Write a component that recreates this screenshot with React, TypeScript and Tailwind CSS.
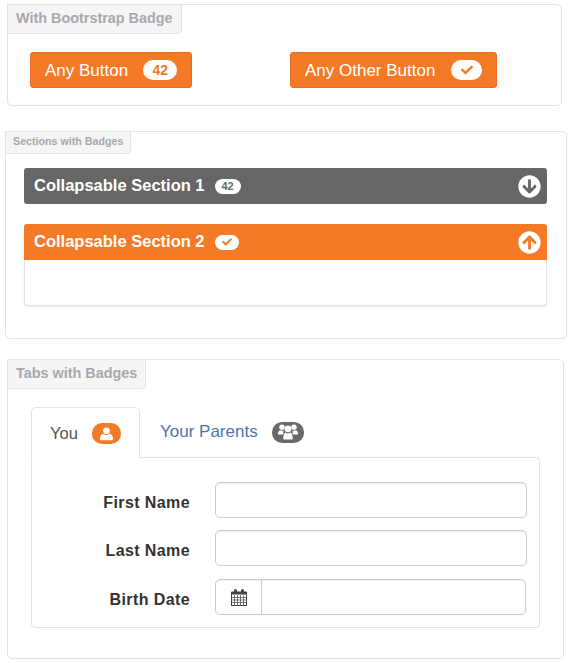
import React from 'react';
import { FaArrowCircleDown, FaArrowCircleUp, FaCheck } from 'react-icons/fa';

const orange = 'bg-[#f57a27]';

// Small grid calendar, the icon packages only have the newer shapes
const CalendarIcon = () => (
  <svg width="16" height="17" viewBox="0 0 16 17" className="text-[#444]">
    <rect x="0.5" y="3.5" width="15" height="13" fill="none" stroke="currentColor" />
    <rect x="0.5" y="2.5" width="15" height="3" fill="currentColor" />
    <rect x="3" y="0" width="3" height="4.5" rx="1.5" fill="currentColor" />
    <rect x="10" y="0" width="3" height="4.5" rx="1.5" fill="currentColor" />
    <path d="M3.5 6v10M6.5 6v10M9.5 6v10M12.5 6v10M1 8.5h14M1 11h14M1 13.5h14" stroke="currentColor" strokeWidth="0.7" fill="none" />
  </svg>
);

const UserIcon = () => (
  <svg width="13" height="14" viewBox="0 0 14 15" fill="currentColor">
    <circle cx="7" cy="4" r="3.6" />
    <path d="M1 14.2c-.6 0-1-.4-1-1 0-3.4 1.2-5.6 3.4-5.9C4.4 8.1 5.6 8.6 7 8.6s2.6-.5 3.6-1.3c2.2.3 3.4 2.5 3.4 5.9 0 .6-.4 1-1 1z" />
  </svg>
);

const UsersIcon = () => (
  <svg width="20" height="16" viewBox="0 0 20 16" fill="currentColor">
    <circle cx="4" cy="3.2" r="2.7" />
    <circle cx="16" cy="3.2" r="2.7" />
    <path d="M0 10.5C0 8 .8 6.5 2.2 6.3c.8.6 2.6.8 3.4.2-.3 1-.4 2.600-.4 4z" />
    <path d="M20 10.500C20 8 19.200 6.500 17.800 6.300c-.8.6-2.600.8-3.400.2.3 1 .4 2.600.4 4z" />
    <circle cx="10" cy="4.800" r="3.400" />
    <path d="M6.300 15.500c-.6 0-1-.4-1-1 0-3.200.8-5.500 2.300-6 .7.600 1.500.9 2.400.9s1.700-.3 2.400-.9c1.500.5 2.300 2.800 2.300 6 0 .6-.4 1-1 1z" />
  </svg>
);

const Panel = ({ label, small, className, children }: { label: string; small?: boolean; className: string; children: React.ReactNode }) => (
  <div className={`rounded-[5px] border border-[#e3e3e3] bg-white ${className}`}>
    <div
      className={`-ml-px -mt-px w-fit rounded-br-[4px] border border-[#e3e3e3] bg-[#f5f5f5] font-bold text-[#a8a8ae] ${
        small ? 'h-[23px] px-[7px] text-[10.7px] leading-[19px]' : 'h-[30px] px-[8px] text-[14.4px] leading-[26px]'
      }`}
    >
      {label}
    </div>
    {children}
  </div>
);

const OrangeButton = ({ text, children, className }: { text: string; children: React.ReactNode; className: string }) => (
  <button className={`flex h-[36px] items-center rounded-[3px] border border-[#e56f20] ${orange} pl-[14px] text-[17px] text-white ${className}`}>
    <span className="mt-[1px]">{text}</span>
    {children}
  </button>
);

const SectionHeader = ({ title, badge, icon, className }: { title: string; badge: React.ReactNode; icon: React.ReactNode; className: string }) => (
  <div className={`flex h-[36px] items-center pb-[2px] pl-[10px] pr-[6px] text-[16.5px] font-bold text-white ${className}`}>
    {title}
    {badge}
    <span className="ml-auto mt-[2px]">{icon}</span>
  </div>
);

const Field = ({ label, children }: { label: string; children?: React.ReactNode }) => (
  <div className="flex h-[36px] items-center">
    <label className="mr-[25px] mt-[5px] w-[134px] text-right text-[16px] font-bold tracking-[0.4px] text-[#333]">{label}</label>
    {children ?? <input className="h-[36px] w-[312px] rounded-[5px] border border-[#ccc] bg-white shadow-[inset_0_1px_1px_rgba(0,0,0,0.08)]" />}
  </div>
);

export default function App() {
  return (
    <div className="h-[663px] w-[570px] overflow-hidden bg-white pt-[4px] font-['Liberation_Sans',Arial,sans-serif]">
      <Panel label="With Bootrstrap Badge" className="ml-[7px] h-[102px] w-[555px]">
        <div className="mt-[18px] flex pl-[22px]">
          <OrangeButton text="Any Button" className="w-[162px]">
            <span className="ml-[15px] flex h-[20px] w-[34px] items-center justify-center rounded-[10px] bg-white text-[14px] font-bold text-[#f57a27]">42</span>
          </OrangeButton>
          <OrangeButton text="Any Other Button" className="ml-[98px] w-[207px]">
            <span className="ml-[16px] flex h-[20px] w-[31px] items-center justify-center rounded-[10px] bg-white text-[#f57a27]">
              <FaCheck size={12} />
            </span>
          </OrangeButton>
        </div>
      </Panel>

      <Panel label="Sections with Badges" small className="ml-[5px] mt-[25px] h-[208px] w-[562px]">
        <div className="mt-[14px] pl-[18px] pr-[19px]">
          <SectionHeader
            title="Collapsable Section 1"
            className="rounded-[3px] bg-[#666]"
            badge={<span className="ml-[10px] mt-[2px] flex h-[15px] w-[26px] items-center justify-center rounded-[8px] bg-white text-[11px] font-bold text-[#666]">42</span>}
            icon={<FaArrowCircleDown size={23} className="text-white" />}
          />
          <div className="mt-[20px] rounded-[3px] border-x border-b border-[#e3e3e3] shadow-[0_1px_2px_rgba(0,0,0,0.08)]">
            <SectionHeader
              title="Collapsable Section 2"
              className={`-mx-px rounded-t-[3px] ${orange}`}
              badge={
                <span className="ml-[10px] mt-[2px] flex h-[15px] w-[24px] items-center justify-center rounded-[8px] bg-white text-[#f57a27]">
                  <FaCheck size={10} />
                </span>
              }
              icon={<FaArrowCircleUp size={23} className="text-white" />}
            />
            <div className="h-[45px]" />
          </div>
        </div>
      </Panel>

      <Panel label="Tabs with Badges" className="ml-[7px] mt-[20px] h-[300px] w-[557px]">
        <div className="ml-[23px] mt-[17px] w-[509px]">
          <div className="flex h-[51px] items-end">
            <div className="relative z-10 -mb-px flex h-[51px] w-[109px] items-center rounded-t-[5px] border border-b-white border-[#e3e3e3] bg-white pl-[18px] pt-[2px] text-[16.5px] text-[#555]">
              You
              <span className="ml-[14px] flex h-[21px] w-[29px] items-center justify-center rounded-[10px] bg-[#f57a27] text-white">
                <UserIcon />
              </span>
            </div>
            <div className="mb-px flex h-[50px] items-center pl-[20px] pt-[2px] text-[17px] text-[#4a76ad]">
              Your Parents
              <span className="ml-[14px] flex h-[21px] w-[32px] items-center justify-center rounded-[10px] bg-[#6a6a6a] text-white">
                <UsersIcon />
              </span>
            </div>
          </div>
          <div className="flex h-[171px] flex-col rounded-b-[4px] rounded-tr-[4px] border border-[#e3e3e3] pl-[24px] pt-[24px]">
            <Field label="First Name" />
            <div className="mt-[12px]">
              <Field label="Last Name" />
            </div>
            <div className="mt-[13px]">
              <Field label="Birth Date">
                <div className="flex h-[36px] w-[311px] rounded-[5px] border border-[#ccc] shadow-[inset_0_1px_1px_rgba(0,0,0,0.08)]">
                  <span className="flex w-[46px] items-center justify-center border-r border-[#ccc]">
                    <CalendarIcon />
                  </span>
                  <input className="min-w-0 flex-1 bg-transparent" />
                </div>
              </Field>
            </div>
          </div>
        </div>
      </Panel>
    </div>
  );
}
